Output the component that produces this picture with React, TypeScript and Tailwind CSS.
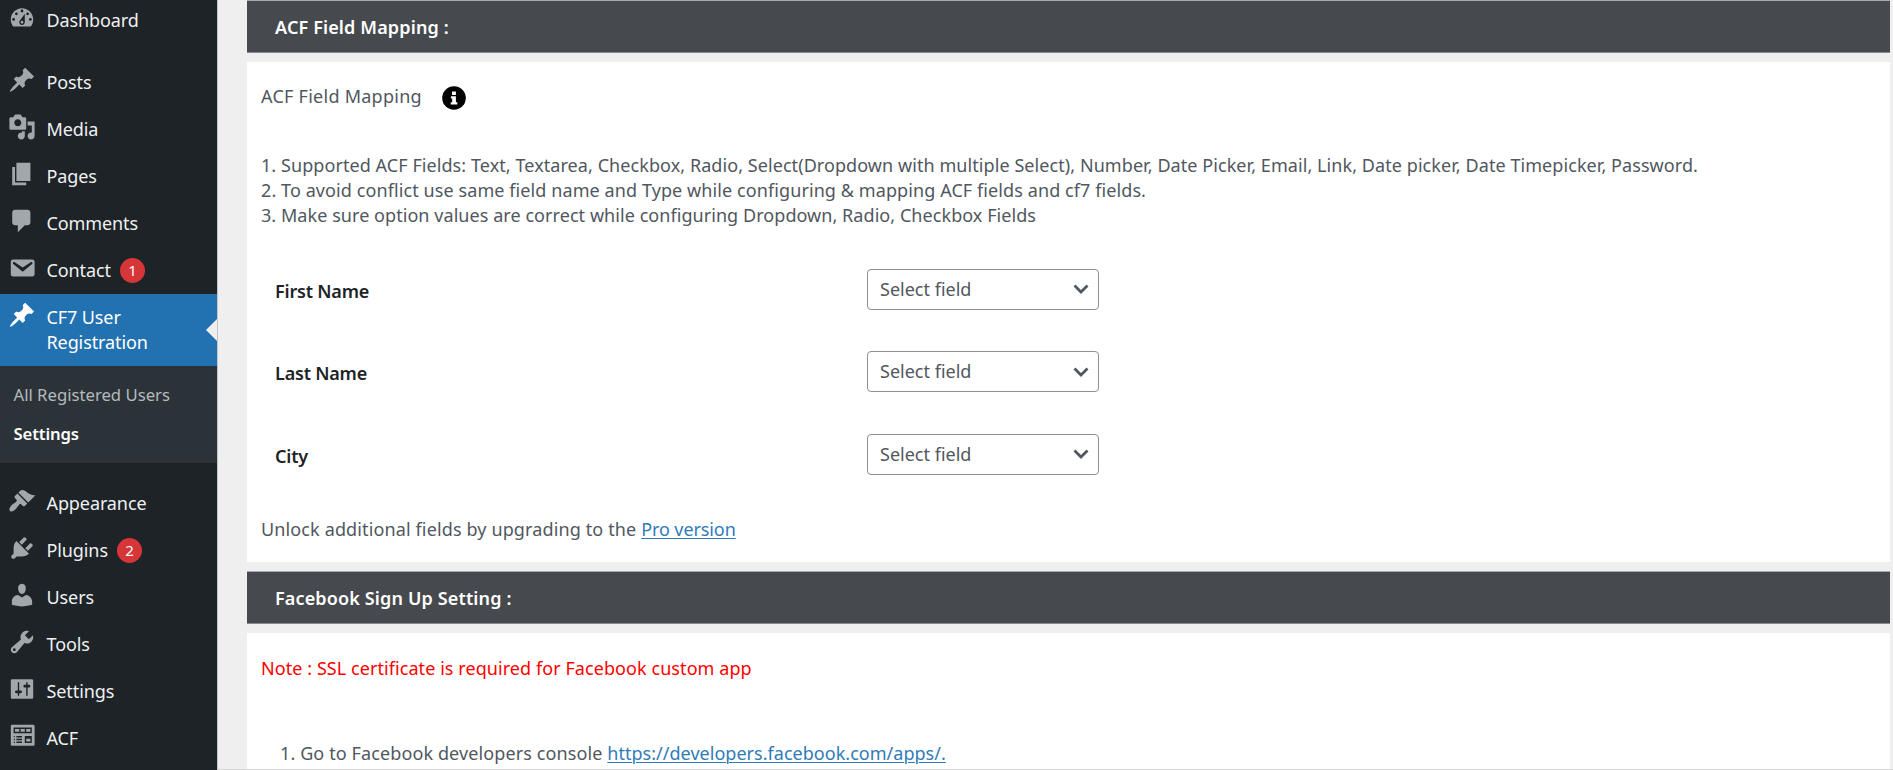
import type { ReactNode } from 'react';

const icons = {
  dashboard:
    'M3.76 16h12.48c1.1-1.37 1.76-3.11 1.76-5 0-4.42-3.58-8-8-8s-8 3.58-8 8c0 1.89.66 3.63 1.76 5zM10 4c.55 0 1 .45 1 1s-.45 1-1 1-1-.45-1-1 .45-1 1-1zM6 6c.55 0 1 .45 1 1s-.45 1-1 1-1-.45-1-1 .45-1 1-1zm8 0c.55 0 1 .45 1 1s-.45 1-1 1-1-.45-1-1 .45-1 1-1zm-5.37 5.55L12 7v6c0 1.1-.9 2-2 2s-2-.9-2-2c0-.57.24-1.08.63-1.45zM4 10c.55 0 1 .45 1 1s-.45 1-1 1-1-.45-1-1 .45-1 1-1zm12 0c.55 0 1 .45 1 1s-.45 1-1 1-1-.45-1-1 .45-1 1-1zm-5 3c0-.55-.45-1-1-1s-1 .45-1 1 .45 1 1 1 1-.45 1-1z',
  post: 'M10.44 3.02l1.82-1.82 6.36 6.35-1.83 1.82c-1.05-.68-2.48-.57-3.41.36l-.75.75c-.92.93-1.04 2.35-.35 3.41l-1.83 1.82-2.41-2.41-2.8 2.79c-.42.42-3.38 2.71-3.8 2.29s1.86-3.39 2.28-3.81l2.79-2.79L4.1 9.36l1.83-1.82c1.05.69 2.48.57 3.4-.36l.75-.75c.93-.92 1.05-2.35.36-3.41z',
  media:
    'M13 11V4c0-.55-.45-1-1-1h-1.67L9 1H5L3.67 3H2c-.55 0-1 .45-1 1v7c0 .55.45 1 1 1h10c.55 0 1-.45 1-1zM7 4.5c1.38 0 2.5 1.12 2.5 2.5S8.38 9.5 7 9.5 4.5 8.38 4.5 7 5.62 4.5 7 4.5zM14 6h5v10.5c0 1.38-1.12 2.5-2.5 2.5S14 17.88 14 16.5s1.12-2.5 2.5-2.5c.17 0 .34.02.5.05V9h-3V6zm-4 8.05V13h2v3.5c0 1.38-1.12 2.5-2.5 2.5S7 17.88 7 16.5 8.12 14 9.5 14c.17 0 .34.02.5.05z',
  page: 'M6 15V2h10v13H6zm-1 1h8v2H3V5h2v11z',
  comments: 'M5 2h9c1.1 0 2 .9 2 2v7c0 1.1-.9 2-2 2h-2l-5 5v-5H5c-1.1 0-2-.9-2-2V4c0-1.1.9-2 2-2z',
  email:
    'M3.87 4h13.25C18.37 4 19 4.59 19 5.79v8.42c0 1.19-.63 1.79-1.88 1.79H3.87c-1.25 0-1.88-.6-1.88-1.79V5.79c0-1.2.63-1.79 1.88-1.79zm6.62 8.6l6.74-5.53c.24-.2.43-.66.13-1.07-.29-.41-.82-.42-1.17-.17l-5.7 3.86L4.8 5.83c-.35-.25-.88-.24-1.17.17-.3.41-.11.87.13 1.07z',
  appearance:
    'M14.48 11.06L7.41 3.99l1.5-1.5c.5-.56 2.3-.47 3.51.32 1.21.8 1.43 1.28 2.91 2.1 1.18.64 2.45 1.26 4.45.85zm-.71.71L6.7 4.7 4.93 6.47c-.39.39-.39 1.02 0 1.41l1.06 1.06c.39.39.39 1.03 0 1.42-.6.6-1.43 1.11-2.21 1.69-.35.26-.7.53-1.01.84C1.43 14.23.4 16.08 1.4 17.07c.99 1 2.84-.03 4.18-1.36.31-.31.58-.66.85-1.02.57-.78 1.08-1.61 1.69-2.21.39-.39 1.02-.39 1.41 0l1.06 1.06c.39.39 1.02.39 1.41 0z',
  plugins:
    'M13.11 4.36L9.87 7.6 8 5.73l3.24-3.24c.35-.34 1.05-.2 1.56.32.52.51.66 1.21.31 1.55zm-8 1.77l.91-1.12 9.01 9.01-1.19.84c-.71.71-2.63 1.16-3.82 1.16H6.14L4.9 17.26c-.59.59-1.54.59-2.12 0-.59-.58-.59-1.53 0-2.12l1.24-1.24v-3.88c0-1.13.4-3.19 1.09-3.89zm7.26 3.97l3.24-3.24c.34-.35 1.04-.21 1.55.31.52.51.66 1.21.31 1.55l-3.24 3.25z',
  users:
    'M10 9.25c-2.27 0-2.73-3.44-2.73-3.44C7 4.02 7.82 2 9.97 2c2.16 0 2.98 2.02 2.71 3.81 0 0-.41 3.44-2.68 3.44zm0 2.57L12.72 10c2.39 0 4.52 2.33 4.52 4.53v2.49s-3.65 1.13-7.24 1.13c-3.65 0-7.24-1.13-7.24-1.13v-2.49c0-2.25 1.94-4.48 4.47-4.48z',
  tools:
    'M16.68 9.77c-1.34 1.34-3.3 1.67-4.95.99l-5.41 6.52c-.99.99-2.59.99-3.58 0s-.99-2.59 0-3.57l6.52-5.42c-.68-1.65-.35-3.61.99-4.95 1.28-1.28 3.12-1.62 4.72-1.06l-2.89 2.89 2.82 2.82 2.86-2.87c.53 1.58.18 3.39-1.08 4.65zM3.81 16.21c.4.39 1.04.39 1.43 0 .4-.4.4-1.04 0-1.43-.39-.4-1.03-.4-1.43 0-.39.39-.39 1.03 0 1.43z',
  settings:
    'M18 16V4c0-.55-.45-1-1-1H3c-.55 0-1 .45-1 1v12c0 .55.45 1 1 1h14c.55 0 1-.45 1-1zM8 11h1c.55 0 1 .45 1 1s-.45 1-1 1H8v1.5c0 .28-.22.5-.5.5s-.5-.22-.5-.5V13H6c-.55 0-1-.45-1-1s.45-1 1-1h1V5.5c0-.28.22-.5.5-.5s.5.22.5.5V11zm5-2h-1c-.55 0-1-.45-1-1s.45-1 1-1h1V5.5c0-.28.22-.5.5-.5s.5.22.5.5V7h1c.55 0 1 .45 1 1s-.45 1-1 1h-1v5.5c0 .28-.22.5-.5.5s-.5-.22-.5-.5V9z',
  widgets:
    'M19 16V3c0-.55-.45-1-1-1H3c-.55 0-1 .45-1 1v13c0 .55.45 1 1 1h15c.55 0 1-.45 1-1zM4 4h13v4H4V4zm1 1v2h3V5H5zm4 0v2h3V5H9zm4 0v2h3V5h-3zm-8.5 5c.28 0 .5.22.5.5s-.22.5-.5.5-.5-.22-.5-.5.22-.5.5-.5zM6 10h4v1H6v-1zm6 0h5v5h-5v-5zm-7.5 2c.28 0 .5.22.5.5s-.22.5-.5.5-.5-.22-.5-.5.22-.5.5-.5zM6 12h4v1H6v-1zm7 0v2h3v-2h-3zm-8.5 2c.28 0 .5.22.5.5s-.22.5-.5.5-.5-.22-.5-.5.22-.5.5-.5zM6 14h4v1H6v-1z',
};

type IconName = keyof typeof icons;

interface MenuItemProps {
  icon: IconName;
  badge?: number;
  current?: boolean;
  children: ReactNode;
}

function MenuItem({ icon, badge, current, children }: MenuItemProps) {
  return (
    <li className={current ? 'relative bg-[#2271b1] text-white' : 'text-[#f0f0f1]'}>
      <a href="#" className="flex py-[11px] pl-2 leading-[25px] tracking-[-0.1px]">
        <svg
          viewBox="0 0 20 20"
          fillRule="evenodd"
          className={current ? '-mt-[4px] h-[28px] w-[28px] shrink-0 fill-white' : '-mt-[4px] -mb-3 h-[28px] w-[28px] shrink-0 fill-[#a2a7ac]'}
        >
          <path d={icons[icon]} />
        </svg>
        <span className="pl-[10.5px]">{children}</span>
        {badge !== undefined && (
          <span className="ml-[9px] h-[25px] w-[25px] rounded-full bg-[#d63638] text-center text-[15px] leading-[25px] text-white">
            {badge}
          </span>
        )}
      </a>
      {current && (
        <span className="absolute top-[25px] right-0 border-y-[11px] border-r-[11px] border-y-transparent border-r-[#efefef]" />
      )}
    </li>
  );
}

function Sidebar() {
  return (
    <nav className="w-[217px] shrink-0 overflow-hidden bg-[#1d2327]">
      <ul className="-mt-[3px]">
        <MenuItem icon="dashboard">Dashboard</MenuItem>
        <li className="h-[15px]" />
        <MenuItem icon="post">Posts</MenuItem>
        <MenuItem icon="media">Media</MenuItem>
        <MenuItem icon="page">Pages</MenuItem>
        <MenuItem icon="comments">Comments</MenuItem>
        <MenuItem icon="email" badge={1}>Contact</MenuItem>
        <MenuItem icon="post" current>
          CF7 User
          <br />
          Registration
        </MenuItem>
        <li className="h-[97px] bg-[#2c3338] pt-[9px] pl-[13.5px] text-[16.7px] leading-[39px]">
          <a href="#" className="block text-[#b4b9be]">All Registered Users</a>
          <a href="#" className="block font-semibold tracking-[-0.15px] text-white">Settings</a>
        </li>
        <li className="h-[17px]" />
        <MenuItem icon="appearance">Appearance</MenuItem>
        <MenuItem icon="plugins" badge={2}>Plugins</MenuItem>
        <MenuItem icon="users">Users</MenuItem>
        <MenuItem icon="tools">Tools</MenuItem>
        <MenuItem icon="settings">Settings</MenuItem>
        <MenuItem icon="widgets">ACF</MenuItem>
      </ul>
    </nav>
  );
}

function SectionHeader({ children }: { children: ReactNode }) {
  return (
    <h2 className="h-[53px] shrink-0 border-y border-t-[#a7aaad] border-b-[#85888c] bg-[#46494d] pl-7 leading-[53px] font-semibold tracking-[0.14px] text-white">
      {children}
    </h2>
  );
}

function FieldRow({ label }: { label: string }) {
  return (
    <div className="flex h-[82.5px] items-center pl-[14px]">
      <div className="w-[592px] pt-[4px] font-semibold tracking-[-0.2px] text-[#1d2327]">{label}</div>
      <button className="flex h-[41px] w-[232px] items-center justify-between rounded-[4px] border border-[#8c8f94] bg-white pr-[9px] pl-3 text-[#50575e]">
        <span>Select field</span>
        <svg viewBox="0 0 16 10" className="h-[10px] w-4 fill-none stroke-[#50575e] stroke-[2.8]">
          <path d="M1.5 1.5L8 8l6.5-6.5" />
        </svg>
      </button>
    </div>
  );
}

const link = 'text-[#2f7bb9] underline decoration-1 underline-offset-[2px]';

export default function App() {
  return (
    <div className="flex h-[770px] w-[1893px] overflow-hidden bg-[#efefef] font-['Noto_Sans','Open_Sans',sans-serif] text-[18px] leading-[25px]">
      <Sidebar />
      <main className="flex grow flex-col border-b border-l border-b-[#d5d5d6] border-l-[#c3c4c7] pr-[3px] pl-[29px] text-[#50575e]">
        <SectionHeader>ACF Field Mapping :</SectionHeader>
        <section className="mt-[9px] h-[500px] shrink-0 bg-white pt-[22px] pl-[14px]">
          <div className="flex h-[25px] items-center">
            <span className="tracking-[0.26px]">ACF Field Mapping</span>
            <svg viewBox="0 0 24 24" className="mt-[3px] ml-[20px] h-6 w-6">
              <circle cx="12" cy="12" r="11.8" />
              <path fill="#fff" d="M10 5.5h3.9v3.6H10zM8.9 10.3h5v5.9h1.4v2.2H8.7v-2.2h1.5v-3.7H8.9z" />
            </svg>
          </div>
          <div className="mt-[44px] whitespace-nowrap">
            <p className="tracking-[0.071px]">1. Supported ACF Fields: Text, Textarea, Checkbox, Radio, Select(Dropdown with multiple Select), Number, Date Picker, Email, Link, Date picker, Date Timepicker, Password.</p>
            <p className="tracking-[0.092px]">2. To avoid conflict use same field name and Type while configuring &amp; mapping ACF fields and cf7 fields.</p>
            <p className="tracking-[0.059px]">3. Make sure option values are correct while configuring Dropdown, Radio, Checkbox Fields</p>
          </div>
          <div className="mt-[20px]">
            <FieldRow label="First Name" />
            <FieldRow label="Last Name" />
            <FieldRow label="City" />
          </div>
          <p className="mt-[21.5px] tracking-[0.13px]">
            Unlock additional fields by upgrading to the{' '}
            <a href="#" className={`${link} tracking-[-0.095px]`}>Pro version</a>
          </p>
        </section>
        <div className="h-[9px] shrink-0" />
        <SectionHeader>Facebook Sign Up Setting :</SectionHeader>
        <section className="mt-[9px] grow bg-white pt-[23px] pl-[14px]">
          <p className="tracking-[0.07px] text-[#ff0000]">Note : SSL certificate is required for Facebook custom app</p>
          <p className="mt-[60px] pl-[19px] tracking-[0.11px]">
            1. Go to Facebook developers console{' '}
            <a href="#" className={`${link} tracking-[0.023px]`}>https://developers.facebook.com/apps/.</a>
          </p>
        </section>
      </main>
    </div>
  );
}
